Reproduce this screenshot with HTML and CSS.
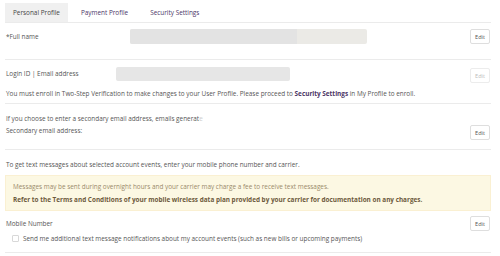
FILE: index.html
```html
<!DOCTYPE html>
<html>
  <head>
    <title>My Profile</title>
    <link rel="stylesheet" href="styles.css">
  </head>
  <body>
    <div class="page">
      <div class="tabs">
        <div class="tab tab-active">Personal Profile</div>
        <div class="tab">Payment Profile</div>
        <div class="tab">Security Settings</div>
      </div>

      <div class="section section-name">
        <div class="row">
          <span class="label label-name">*Full name</span>
          <div class="field field-name">
            <div class="field-fill"></div>
          </div>
          <button class="edit-button">Edit</button>
        </div>
      </div>

      <div class="section section-login">
        <div class="row">
          <span class="label label-login">Login ID | Email address</span>
          <div class="field field-login"></div>
          <button class="edit-button edit-disabled">Edit</button>
        </div>
        <p class="note">You must enroll in Two-Step Verification to make changes to your User Profile. Please proceed to <span class="link">Security Settings</span> in My Profile to enroll.</p>
      </div>

      <div class="section section-secondary">
        <p class="text">If you choose to enter a secondary email address, emails generat<span class="cut">e</span></p>
        <div class="row row-top">
          <span class="label">Secondary email address:</span>
          <button class="edit-button">Edit</button>
        </div>
      </div>

      <div class="section section-mobile">
        <p class="text">To get text messages about selected account events, enter your mobile phone number and carrier.</p>
        <div class="alert">
          <p>Messages may be sent during overnight hours and your carrier may charge a fee to receive text messages.</p>
          <p class="alert-strong">Refer to the Terms and Conditions of your mobile wireless data plan provided by your carrier for documentation on any charges.</p>
        </div>
        <div class="row">
          <span class="label">Mobile Number</span>
          <button class="edit-button">Edit</button>
        </div>
        <label class="check-row">
          <span class="check-box"></span>
          Send me additional text message notifications about my account events (such as new bills or upcoming payments)
        </label>
      </div>
    </div>
  </body>
</html>
```

FILE: styles.css
```css
body{
  margin: 0;
  background-color: white;
  color: #555;
  font-family: "Open Sans", "Noto Sans", sans-serif;
  font-size: 6.4px;
}

p{
  margin: 0;
}

.page{
  padding: 3px 9px 0 5px;
}

.tabs{
  display: flex;
  border-bottom: 1px solid #ebebeb;
  height: 19px;
}

.tab{
  padding: 0 9px 0 11px;
  line-height: 19px;
  color: #4b3566;
  margin-right: 2px;
}

.tab-active{
  background-color: #f0f0f0;
  color: #444;
  padding: 0 8px 0 8px;
}

.section{
  border-bottom: 1px solid #ebebeb;
  padding: 0 1px;
}

.row{
  display: flex;
  align-items: center;
}

.row-top{
  align-items: flex-start;
}

.label{
  flex: none;
  line-height: 11px;
}

.label-name{
  width: 124px;
}

.label-login{
  width: 110px;
}

.field{
  height: 15px;
  background-color: #e6e6e6;
  border-radius: 2px;
}

.field-name{
  width: 237px;
  background-color: #ebeae6;
  display: flex;
}

.field-fill{
  width: 167px;
  background-color: #e3e3e3;
  border-radius: 2px 0 0 2px;
}

.field-login{
  width: 174px;
  height: 14px;
}

.edit-button{
  margin-left: auto;
  width: 20px;
  height: 15px;
  padding: 0;
  background-color: white;
  border: 1px solid #dedede;
  border-radius: 2px;
  font-family: inherit;
  font-size: 5.6px;
  color: #555;
}

.edit-disabled{
  color: #bbb;
  border-color: #ececec;
}

.section-name{
  height: 36px;
}

.section-name .row{
  padding-top: 6px;
}

.section-login{
  height: 43px;
}

.section-login .row{
  padding-top: 4px;
}

.section-login .edit-button{
  margin-top: 4px;
}

.note{
  margin-top: 5px;
  line-height: 11px;
}

.link{
  color: #4b3566;
  font-weight: bold;
}

.section-secondary{
  height: 45px;
}

.text{
  padding-top: 9px;
  line-height: 11px;
}

.cut{
  opacity: 0.3;
}

.section-secondary .row{
  margin-top: 1px;
}

.section-secondary .edit-button{
  margin-top: 0;
}

.alert{
  margin: 5px -1px 0;
  padding: 4px 7px;
  background-color: #fcf8e3;
  border: 1px solid #faf0d2;
  color: #9a8a6a;
  line-height: 13px;
}

.alert-strong{
  font-weight: bold;
  color: #6d5a3c;
}

.section-mobile .row{
  margin-top: 5px;
}

.check-row{
  display: flex;
  align-items: center;
  gap: 4px;
  padding: 3px 0 9px 6px;
}

.check-box{
  width: 5px;
  height: 5px;
  border: 1px solid #d8d8d8;
  border-radius: 1px;
}
```
